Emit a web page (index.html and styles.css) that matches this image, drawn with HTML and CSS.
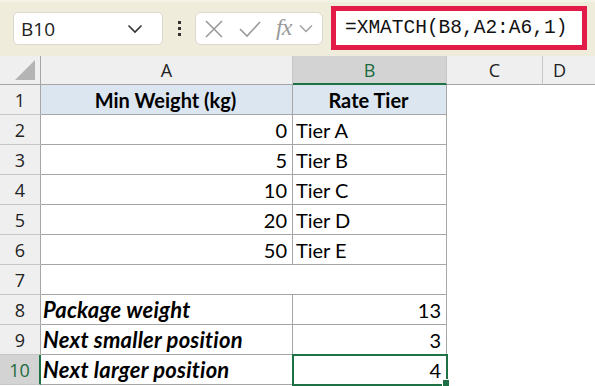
FILE: index.html
```html
<!DOCTYPE html>
<html>
<head>
<meta charset="utf-8">
<link rel="stylesheet" href="styles.css">
</head>
<body>
<div class="toolbar">
  <div class="namebox">
    <span class="name">B10</span>
    <svg class="chev" width="16" height="10" viewBox="0 0 16 10"><path d="M1.5 1.5 L8 8 L14.5 1.5" fill="none" stroke="#333" stroke-width="1.6"/></svg>
  </div>
  <div class="dots"><span></span><span></span><span></span></div>
  <div class="fbtns">
    <svg width="18" height="18" viewBox="0 0 18 18"><path d="M1 1 L17 17 M17 1 L1 17" stroke="#9a9a9a" stroke-width="1.6" fill="none"/></svg>
    <svg width="22" height="18" viewBox="0 0 22 18"><path d="M1 9 L8 16 L21 2" stroke="#9a9a9a" stroke-width="1.6" fill="none"/></svg>
    <span class="fx">fx</span>
    <svg class="chev2" width="14" height="9" viewBox="0 0 14 9"><path d="M1 1.5 L7 7.5 L13 1.5" fill="none" stroke="#a0a0a0" stroke-width="1.5"/></svg>
  </div>
  <div class="formula">=XMATCH(B8,A2:A6,1)</div>
</div>
<div class="sheet">
  <div class="hd corner"><span class="tri"></span></div>
  <div class="hd col">A</div>
  <div class="hd col sel">B</div>
  <div class="hd col">C</div>
  <div class="hd col last">D</div>

  <div class="rh">1</div>
  <div class="c th b">Min Weight (kg)</div>
  <div class="c th b">Rate Tier</div>
  <div class="e"></div><div class="e"></div>

  <div class="rh">2</div>
  <div class="c r">0</div>
  <div class="c l">Tier A</div>
  <div class="e"></div><div class="e"></div>

  <div class="rh">3</div>
  <div class="c r">5</div>
  <div class="c l">Tier B</div>
  <div class="e"></div><div class="e"></div>

  <div class="rh">4</div>
  <div class="c r">10</div>
  <div class="c l">Tier C</div>
  <div class="e"></div><div class="e"></div>

  <div class="rh">5</div>
  <div class="c r">20</div>
  <div class="c l">Tier D</div>
  <div class="e"></div><div class="e"></div>

  <div class="rh">6</div>
  <div class="c r">50</div>
  <div class="c l">Tier E</div>
  <div class="e"></div><div class="e"></div>

  <div class="rh">7</div>
  <div class="c blank"></div>
  <div class="c"></div>
  <div class="e"></div><div class="e"></div>

  <div class="rh">8</div>
  <div class="c l bi">Package weight</div>
  <div class="c r">13</div>
  <div class="e"></div><div class="e"></div>

  <div class="rh">9</div>
  <div class="c l bi">Next smaller position</div>
  <div class="c r">3</div>
  <div class="e"></div><div class="e"></div>

  <div class="rh selrow">10</div>
  <div class="c l bi">Next larger position</div>
  <div class="c r active">4<span class="handle"></span></div>
  <div class="e"></div><div class="e"></div>
</div>
</body>
</html>
```
FILE: styles.css
```css
html, body { margin: 0; padding: 0; background: #fff; }
body { width: 595px; height: 386px; overflow: hidden; font-family: Lato, "Noto Sans", sans-serif; }

.toolbar {
  height: 56px;
  background: #f0ecdb;
  display: flex;
  align-items: flex-start;
  box-sizing: border-box;
  padding-top: 12px;
  padding-left: 13px;
  border-top: 2px solid #f5f2e6;
}
.namebox {
  width: 150px; height: 33px; box-sizing: border-box;
  margin-top: -2px;
  background: #fff; border: 1px solid #dcd9cc; border-radius: 5px;
  display: flex; align-items: center; justify-content: space-between;
  padding: 0 19px 0 7px;
  font-family: "Open Sans", "Noto Sans", sans-serif; font-size: 19px; color: #222;
}
.dots { width: 32px; height: 33px; margin-top: -2px; display: flex; flex-direction: column; align-items: center; justify-content: center; gap: 3px; }
.dots span { width: 3px; height: 3px; background: #333; display: block; }
.fbtns {
  width: 128px; height: 33px; box-sizing: border-box; margin-top: -2px;
  background: #fff; border: 1px solid #dcd9cc; border-radius: 6px;
  display: flex; align-items: center; padding-left: 9px; gap: 0;
}
.fbtns svg:nth-child(1) { margin-right: 16px; }
.fbtns svg:nth-child(2) { margin-right: 15px; }
.fx { font-family: "Liberation Serif", serif; font-style: italic; font-size: 24px; color: #9a9a9a; margin-right: 8px; line-height: 1; margin-top: -3px; letter-spacing: -1px; }
.formula {
  margin-left: 8px; margin-top: -8px;
  width: 256px; height: 44px; box-sizing: border-box;
  border: 5px solid #e31c47; background: #fff;
  font-family: "Liberation Mono", monospace; font-size: 19.5px; color: #111;
  padding-left: 9px; line-height: 34px;
}

.sheet {
  display: grid;
  grid-template-columns: 41px 252px 154px 96px 1fr;
  grid-template-rows: 29px repeat(10, 30px);
  font-size: 20px; color: #000;
}
.hd {
  background: #efefef; box-sizing: border-box;
  border-bottom: 1px solid #a6a6a6;
  display: flex; align-items: center; justify-content: center;
  font-family: "Open Sans", "Noto Sans", sans-serif; font-size: 18px; color: #222;
}
.corner { border-right: 1px solid #a6a6a6; position: relative; }
.tri { position: absolute; right: 5px; bottom: 4px; width: 0; height: 0; border-left: 20px solid transparent; border-bottom: 20px solid #b4b4b4; }
.col { border-right: 1px solid #c6c6c6; }
.col.last { border-right: none; justify-content: flex-start; padding-left: 10px; }
.col.sel { background: #d3d3d3; color: #1c6b3f; border-bottom: 2px solid #1e7145; }

.rh {
  background: #efefef; box-sizing: border-box;
  border-right: 1px solid #a6a6a6; border-bottom: 1px solid #c6c6c6;
  display: flex; align-items: center; justify-content: center;
  font-family: "Open Sans", "Noto Sans", sans-serif; font-size: 18px; color: #222;
}
.rh.selrow { background: #d3d3d3; color: #1c6b3f; border-right: 2px solid #1e7145; }

.c {
  box-sizing: border-box;
  border-right: 1px solid #a6a6a6; border-bottom: 1px solid #a6a6a6;
  display: flex; align-items: center;
  padding: 0 5px 0 3px; white-space: nowrap;
}
.c.blank { border-right: none; }
.th { background: #dce6f1; justify-content: center; font-weight: bold; }
.r { justify-content: flex-end; }
.l { justify-content: flex-start; }
.bi { font-weight: bold; font-style: italic; font-size: 22px; padding-left: 2px; letter-spacing: 0.2px; }
.e { }
.active { position: relative; outline: 2px solid #1e7145; outline-offset: -1px; }
.handle { position: absolute; right: -4px; bottom: -3px; width: 6px; height: 6px; background: #1e7145; border: 1px solid #fff; }
```
